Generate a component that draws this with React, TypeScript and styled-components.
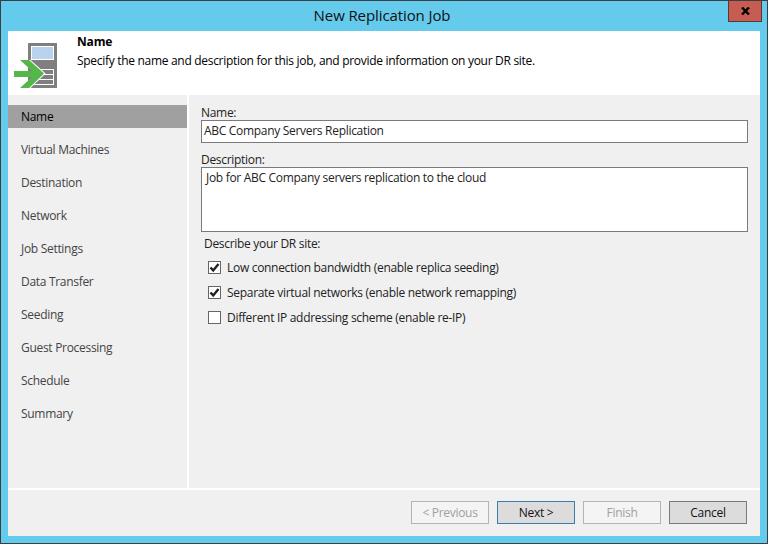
import React from 'react';
import styled, { createGlobalStyle } from 'styled-components';

const GlobalStyle = createGlobalStyle`
	html, body {
		margin: 0;
		padding: 0;
		background: #65cbec;
	}
	body {
		font-family: 'Open Sans', 'Noto Sans', sans-serif;
		font-size: 12px;
		letter-spacing: -0.3px;
		color: #000;
	}
`;

const Window = styled.div`
	width: 768px;
	height: 544px;
	box-sizing: border-box;
	border: 1px solid #3a3f44;
	background: #65cbec;
	display: flex;
	flex-direction: column;
	position: relative;
`;

const TitleBar = styled.div`
	height: 30px;
	flex: none;
	box-sizing: border-box;
	padding: 0 4px 2px 0;
	display: flex;
	align-items: center;
	justify-content: center;
	font-size: 15px;
	letter-spacing: -0.1px;
	color: #111;
`;

const CloseButton = styled.div`
	position: absolute;
	top: 0;
	right: 5px;
	width: 34px;
	height: 21px;
	box-sizing: border-box;
	background: #c75c52;
	border: 1px solid #5b3733;
	border-top: none;
	display: flex;
	align-items: center;
	justify-content: center;
`;

const Client = styled.div`
	flex: 1;
	margin: 0 7px 7px;
	display: flex;
	flex-direction: column;
	background: #f0f0f0;
	min-height: 0;
`;

const Header = styled.div`
	height: 64px;
	flex: none;
	background: #fff;
	display: flex;
`;

const HeaderIcon = styled.div`
	width: 69px;
	flex: none;
	padding: 11px 0 0 6px;
	box-sizing: border-box;
`;

const HeaderText = styled.div`
	padding-top: 2px;
`;

const HeaderTitle = styled.div`
	font-weight: 700;
	font-size: 12px;
	line-height: 17px;
	letter-spacing: -0.15px;
`;

const HeaderDescription = styled.div`
	font-size: 12px;
	line-height: 17px;
	margin-top: 2px;
`;

const Body = styled.div`
	flex: 1;
	display: flex;
	min-height: 0;
	border-bottom: 2px solid #fff;
`;

const Sidebar = styled.div`
	width: 179px;
	flex: none;
	padding-top: 10px;
	border-right: 2px solid #fff;
	display: flex;
	flex-direction: column;
`;

const Step = styled.div<{ $active?: boolean }>`
	height: 23px;
	margin-bottom: 10px;
	padding-left: 13px;
	display: flex;
	align-items: center;
	color: ${p => (p.$active ? '#000' : '#444')};
	background: ${p => (p.$active ? '#a0a0a0' : 'transparent')};
`;

const Content = styled.div`
	flex: 1;
	padding: 9px 12px 0 12px;
	display: flex;
	flex-direction: column;
`;

const FieldLabel = styled.div`
	height: 16px;
	line-height: 18px;
	color: #222;
`;

const TextBox = styled.div<{ $height: number; $gap: number }>`
	height: ${p => p.$height}px;
	box-sizing: border-box;
	background: #fff;
	border: 1px solid #7a7a7a;
	padding: ${p => (p.$height > 30 ? '1px 4px' : '1px 2px')};
	line-height: 17px;
	margin-bottom: ${p => p.$gap}px;
	color: #222;
`;

const GroupLabel = styled.div`
	height: 17px;
	line-height: 17px;
	margin: 0 0 3px 3px;
	color: #222;
`;

const CheckRow = styled.div`
	height: 25px;
	margin-left: 7px;
	display: flex;
	align-items: center;
	gap: 6px;
	color: #222;
`;

const CheckBox = styled.div`
	width: 13px;
	height: 13px;
	box-sizing: border-box;
	background: #fff;
	border: 1px solid #666;
	display: flex;
	align-items: center;
	justify-content: center;
`;

const Footer = styled.div`
	height: 46px;
	flex: none;
	padding: 11px 13px 0 0;
	box-sizing: border-box;
	display: flex;
	justify-content: flex-end;
	gap: 8px;
`;

const Button = styled.div<{ $kind: 'disabled' | 'primary' | 'normal' }>`
	width: 78px;
	height: 23px;
	box-sizing: border-box;
	display: flex;
	align-items: center;
	justify-content: center;
	border: 1px solid
		${p =>
			p.$kind === 'disabled' ? '#b4b4b4' : p.$kind === 'primary' ? '#3b7ea9' : '#7a7a7a'};
	background: ${p => (p.$kind === 'disabled' ? '#f4f4f4' : '#dcdcdc')};
	color: ${p => (p.$kind === 'disabled' ? '#a0a0a0' : '#111')};
`;

const steps = [
	'Name',
	'Virtual Machines',
	'Destination',
	'Network',
	'Job Settings',
	'Data Transfer',
	'Seeding',
	'Guest Processing',
	'Schedule',
	'Summary'
];

const options = [
	{ label: 'Low connection bandwidth (enable replica seeding)', checked: true },
	{ label: 'Separate virtual networks (enable network remapping)', checked: true },
	{ label: 'Different IP addressing scheme (enable re-IP)', checked: false }
];

const JobIcon = () => (
	<svg width='51' height='47' viewBox='0 0 51 47'>
		<g shapeRendering='crispEdges'>
			<rect x='14' y='1' width='29' height='45' fill='#7f7f7f' />
			<rect x='17.5' y='4.5' width='22' height='13' fill='#b9d3ee' stroke='#fff' />
			<path
				d='M20 27.5H39.5M20 32.5H39.5M20 37.5H39.5M39.5 27V43M20 42.5H40'
				fill='none'
				stroke='#fff'
			/>
		</g>
		<path d='M15.5 18L30.5 31.5L15.5 46' fill='none' stroke='#fff' strokeWidth='1.5' />
		<path d='M6 18H15L30 31.5L15 46H6L18 35H0V29H18Z' fill='#53b848' />
	</svg>
);

const CheckMark = () => (
	<svg width='11' height='11' viewBox='0 0 11 11'>
		<path d='M1.5 5.5L4.2 8.4L9.5 2' fill='none' stroke='#222' strokeWidth='2.4' />
	</svg>
);

const App: React.FC = () => {
	return (
		<>
			<GlobalStyle />
			<Window>
				<TitleBar>New Replication Job</TitleBar>
				<CloseButton>
					<svg width='9' height='8' viewBox='0 0 9 8'>
						<path d='M1 0.5L8 7.5M8 0.5L1 7.5' stroke='#000' strokeWidth='2.4' />
					</svg>
				</CloseButton>
				<Client>
					<Header>
						<HeaderIcon>
							<JobIcon />
						</HeaderIcon>
						<HeaderText>
							<HeaderTitle>Name</HeaderTitle>
							<HeaderDescription>
								Specify the name and description for this job, and provide
								information on your DR site.
							</HeaderDescription>
						</HeaderText>
					</Header>
					<Body>
						<Sidebar>
							{steps.map((step, i) => (
								<Step key={step} $active={i === 0}>
									{step}
								</Step>
							))}
						</Sidebar>
						<Content>
							<FieldLabel>Name:</FieldLabel>
							<TextBox $height={23} $gap={8}>
								ABC Company Servers Replication
							</TextBox>
							<FieldLabel>Description:</FieldLabel>
							<TextBox $height={65} $gap={3}>
								Job for ABC Company servers replication to the cloud
							</TextBox>
							<GroupLabel>Describe your DR site:</GroupLabel>
							{options.map(option => (
								<CheckRow key={option.label}>
									<CheckBox>{option.checked && <CheckMark />}</CheckBox>
									{option.label}
								</CheckRow>
							))}
						</Content>
					</Body>
					<Footer>
						<Button $kind='disabled'>&lt; Previous</Button>
						<Button $kind='primary'>Next &gt;</Button>
						<Button $kind='disabled'>Finish</Button>
						<Button $kind='normal'>Cancel</Button>
					</Footer>
				</Client>
			</Window>
		</>
	);
};

export default App;
